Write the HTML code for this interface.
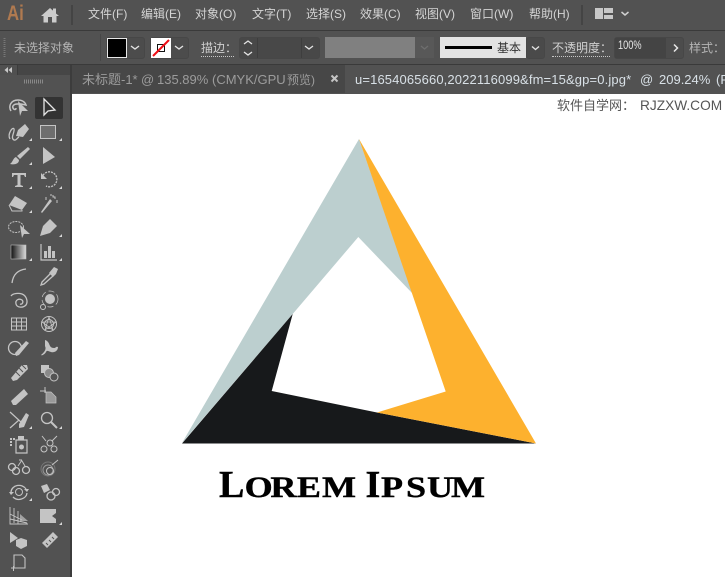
<!DOCTYPE html>
<html lang="zh"><head><meta charset="utf-8"><style>
*{box-sizing:border-box}
html,body{margin:0;padding:0;width:725px;height:577px;overflow:hidden;background:#525252;font-family:"Liberation Sans","Noto Sans CJK SC",sans-serif}
.a{position:absolute;white-space:nowrap}
.m{top:6px;font-size:12px;line-height:16px;color:#d4d4d4}
.l{top:40px;font-size:12px;line-height:16px;color:#bdbdbd}
.box{border:1px solid #474747;border-radius:3px;top:37px;height:22px;background:#4c4c4c}
.dot{border-bottom:1px dotted #c8c8c8;height:17px}
.t1{top:72px;font-size:13px;line-height:16px;color:#9c9c9c}
.t2{top:72px;font-size:13px;line-height:16px;color:#d8e0e6}
</style></head><body>
<div class="a" style="left:0;top:30px;width:725px;height:1px;background:#3a3a3a"></div>
<div class="a" style="left:0;top:64px;width:725px;height:1px;background:#3a3a3a"></div>
<div class="a" style="left:7px;top:1px;font:bold 21px/26px 'Liberation Sans',sans-serif;color:#b07a50;transform:scaleX(.8);transform-origin:0 0">Ai</div>
<svg class="a" style="left:0;top:0" width="80" height="30"><path d="M41 16 50 8l3 2.600V8.500h3v5L59 16h-2.500v6.500H52V17h-4v5.500h-4.500V16Z" fill="#cccccc"/><rect x="71" y="5" width="2" height="20" fill="#444"/></svg>
<div class="a m" style="left:88px">文件(F)</div>
<div class="a m" style="left:141px">编辑(E)</div>
<div class="a m" style="left:195px">对象(O)</div>
<div class="a m" style="left:252px">文字(T)</div>
<div class="a m" style="left:306px">选择(S)</div>
<div class="a m" style="left:360px">效果(C)</div>
<div class="a m" style="left:415px">视图(V)</div>
<div class="a m" style="left:470px">窗口(W)</div>
<div class="a m" style="left:529px">帮助(H)</div>
<svg class="a" style="left:580px;top:0" width="60" height="30"><rect x="1" y="5" width="2" height="20" fill="#444"/><path d="M15 8h8v11h-8ZM24 8h9v5h-9ZM24 15h9v4h-9Z" fill="#c8c8c8"/><path d="M41.500 12l3.500 3 3.500-3" fill="none" stroke="#d0d0d0" stroke-width="1.500"/></svg>

<svg class="a" style="left:3px;top:37px" width="4" height="22"><path d="M1.500 1v20" stroke="#777" stroke-width="2" stroke-dasharray="1 1"/></svg>
<div class="a l" style="left:14px;color:#b4b4b4">未选择对象</div>
<div class="a" style="left:100px;top:34px;width:1px;height:27px;background:#474747"></div>
<div class="a box" style="left:106px;width:39px"></div>
<div class="a" style="left:107px;top:38px;width:20px;height:20px;background:#000;border:1px solid #e8e8e8"></div>
<div class="a box" style="left:150px;width:39px"></div>
<svg class="a" style="left:151px;top:38px" width="20" height="20"><rect width="20" height="20" fill="#fff"/><rect x="6.500" y="6.500" width="7" height="7" fill="none" stroke="#111"/><path d="M2 18 18 2" stroke="#f00f16" stroke-width="2"/></svg>
<svg class="a" style="left:100px;top:30px" width="240" height="34"><g fill="none" stroke="#e4e4e4" stroke-width="1.400"><path d="M31 16l4 3 4-3M75 16l4 3 4-3"/></g></svg>
<div class="a l dot" style="left:201px;width:33px;color:#d0d0d0">描边：</div>
<div class="a box" style="left:239px;width:81px;background:#484848"></div>
<div class="a" style="left:257px;top:38px;width:1px;height:20px;background:#3e3e3e"></div>
<div class="a" style="left:301px;top:38px;width:1px;height:20px;background:#3e3e3e"></div>
<svg class="a" style="left:239px;top:37px" width="81" height="22"><g fill="none" stroke="#e4e4e4" stroke-width="1.300"><path d="M5 7l4-3 4 3M5 15l4 3 4-3M66 9l4 3 4-3"/></g></svg>
<div class="a" style="left:325px;top:37px;width:90px;height:21px;background:#808080"></div>
<div class="a" style="left:415px;top:37px;width:19px;height:21px;background:#585858"></div>
<svg class="a" style="left:415px;top:37px" width="19" height="21"><path d="M6 9l3.500 3 3.500-3" fill="none" stroke="#6e6e6e" stroke-width="1.300"/></svg>
<div class="a" style="left:440px;top:37px;width:86px;height:21px;background:#e2e2e2"></div>
<div class="a" style="left:445px;top:46px;width:47px;height:3px;background:#000"></div>
<div class="a" style="left:497px;top:40px;font-size:12px;line-height:16px;color:#333">基本</div>
<div class="a box" style="left:526px;width:19px;background:#4a4a4a"></div>
<svg class="a" style="left:526px;top:37px" width="19" height="22"><path d="M6 9.500l3.500 3 3.500-3" fill="none" stroke="#e4e4e4" stroke-width="1.400"/></svg>
<div class="a l dot" style="left:552px;width:58px;color:#d0d0d0">不透明度：</div>
<div class="a box" style="left:614px;width:70px;background:#4c4c4c"></div>
<div class="a" style="left:615px;top:38px;width:51px;height:20px;background:#444"></div>
<div class="a" style="left:618px;top:39px;font-size:11.500px;line-height:14px;color:#e8e8e8;transform:scaleX(.8);transform-origin:0 0">100%</div>
<svg class="a" style="left:667px;top:37px" width="17" height="22"><path d="M7 7.500l3.500 3.500L7 14.500" fill="none" stroke="#e8e8e8" stroke-width="1.500"/></svg>
<div class="a l" style="left:689px;color:#b4b4b4">样式：</div>

<div class="a" style="left:72px;top:65px;width:653px;height:28px;background:#424242"></div>
<div class="a" style="left:72px;top:65px;width:273px;height:28px;background:#474747"></div>
<div class="a" style="left:345px;top:65px;width:380px;height:28px;background:#525252"></div>
<div class="a t1" style="left:82px">未标题-1*</div>
<div class="a t1" style="left:141px">@</div>
<div class="a t1" style="left:157px">135.89%</div>
<div class="a t1" style="left:212px">(CMYK/GPU</div>
<div class="a t1" style="left:287px;font-size:12px">预览)</div>
<svg class="a" style="left:330px;top:74px" width="10" height="10"><path d="M1.500 1.500l6 6M7.500 1.500l-6 6" stroke="#c4c4c4" stroke-width="2"/></svg>
<div class="a t2" style="left:355px;letter-spacing:.13px">u=1654065660,2022116099&amp;fm=15&amp;gp=0.jpg*</div>
<div class="a t2" style="left:640px">@</div>
<div class="a t2" style="left:659px">209.24%</div>
<div class="a t2" style="left:716px">(R</div>
<div class="a" style="left:70px;top:65px;width:2px;height:512px;background:#3c3c3c"></div>
<div class="a" style="left:0;top:65px;width:70px;height:10px;background:#464646"></div>
<div class="a" style="left:0;top:65px;width:17px;height:10px;background:#505050"></div>
<div class="a" style="left:17px;top:65px;width:1px;height:10px;background:#3c3c3c"></div>
<svg class="a" style="left:0;top:65px" width="70" height="22"><path d="M8 2 4.500 5 8 8ZM12 2 8.500 5 12 8Z" fill="#c8c8c8"/><path d="M24 16.500h19" stroke="#888" stroke-width="4" stroke-dasharray="1 1"/></svg>

<div class="a" style="left:72px;top:94px;width:653px;height:483px;background:#fff"></div>
<div class="a" style="left:557px;top:97px;font-size:13px;line-height:18px;color:#555">软件自学网：</div>
<div class="a" style="left:640px;top:97px;font-size:13.700px;line-height:18px;color:#555">RJZXW.COM</div>

<svg class="a" style="left:0;top:0" width="725" height="577">
<polygon points="359,139 412.500,293.500 358.300,237 292.700,314 182,443" fill="#bccfcf"/>
<polygon points="182,443.500 292.700,314 271.700,391 377,412.500 536,443.500" fill="#17191b"/>
<polygon points="359,139 536,443.500 377,412.500 445.700,391.500" fill="#fdb12e"/>
<g font-family="Liberation Serif" font-weight="bold" stroke="#000" stroke-width=".4" fill="#000" style="font-variant:small-caps">
<text x="219" y="497" font-size="38">L</text>
<text transform="scale(1.22,1)" x="200.500 221.600 243.400 263.900" y="497" font-size="42">orem</text>
<text x="365.500" y="497" font-size="38">I</text>
<text transform="scale(1.22,1)" x="312.300 332.800 350 369.700" y="497" font-size="42">psum</text>
</g>
</svg>

<svg class="a" style="left:0;top:0" width="72" height="577">
<rect x="35" y="97" width="28" height="22" rx="2" fill="#333"/>
<g fill="#c4c4c4" stroke="none">
<g transform="translate(19,108)"><path d="M-8 3C-11-2-8-8-1-8 3-8 6-6 7-3L2-4-2-4C-5-4-7-2-6 0-5 2-3 2-3 0" fill="none" stroke="#c4c4c4" stroke-width="1.500"/><path d="M-1-7 9 3 3 3 1 8Z"/></g>
<g transform="translate(49,108)"><path d="M-5-9V7L-1 3 6 2Z" fill="none" stroke="#e6e6e6" stroke-width="1.300"/></g>
<g transform="translate(19,132)"><path d="M-1-2 6-8 10-3 4 5-3 4Z"/><path d="M-9 7C-12 2-6-6-5-3-4 0-9 6-5 8-3 9-2 6 0 5" fill="none" stroke="#c4c4c4" stroke-width="1.300"/></g>
<g transform="translate(48,132)"><rect x="-7.500" y="-6.500" width="15" height="13" fill="#6e6e6e" stroke="#c4c4c4"/></g>
<g transform="translate(19,156)"><path d="M9-9 11-7 1 3-2 0Z"/><path d="M-3 1 0 4C0 8-5 9-9 8-6 6-6 2-3 1Z"/></g>
<g transform="translate(49,156)"><path d="M-6-9 6 1-6 8Z"/></g>
<g transform="translate(19,180)"><path d="M-7-7H7V-3H6L5-5H1.500V5L4 6V7H-4V6L-1.500 5V-5H-5L-6-3H-7Z"/></g>
<g transform="translate(49,180)"><path d="M-7-2A7.500 7.500 0 1 1-3 6" fill="none" stroke="#c4c4c4" stroke-width="1.300" stroke-dasharray="2 1"/><path d="M-8-7V-1H-2Z"/></g>
<g transform="translate(18,204)"><path d="M-3-8 9-1 4 6-9 1Z"/><path d="M-9 1-6 7 4 7 4 6" fill="none" stroke="#c4c4c4"/></g>
<g transform="translate(49,204)"><path d="M-8 8-7 9 3-3 1-5Z"/><path d="M4-9V-7H6V-5M-3-7V-4M8-4V-1M2-10V-8" stroke="#c4c4c4" fill="none"/></g>
<g transform="translate(19,228)"><ellipse cx="-3" cy="-1" rx="7.500" ry="5.500" fill="none" stroke="#c4c4c4" stroke-dasharray="2 1"/><path d="M1-3 11 6 5 6 3 10Z"/></g>
<g transform="translate(48,228)"><path d="M-8 8-5-2 2-9 9-2 2 5Z"/></g>
<g transform="translate(19,252)"><defs><linearGradient id="g"><stop offset="0" stop-color="#111"/><stop offset="1" stop-color="#ddd"/></linearGradient></defs><rect x="-8" y="-7" width="15" height="14" fill="url(#g)" stroke="#bbb" stroke-width=".6"/></g>
<g transform="translate(49,252)"><path d="M-8-8V8H8" fill="none" stroke="#c4c4c4" stroke-width="1.200"/><path d="M-5-1H-2V6H-5ZM-1-6H2V6H-1ZM3-1H6V6H3Z"/></g>
<g transform="translate(19,276)"><path d="M-7 7C-6-1-2-6 7-7" fill="none" stroke="#c4c4c4" stroke-width="1.300"/></g>
<g transform="translate(49,276)"><path d="M2-3-7 6-8 9-5 8 4 0" fill="none" stroke="#c4c4c4" stroke-width="1.300"/><path d="M0-3 5-9 9-7 7-2 4 1Z"/></g>
<g transform="translate(19,300)"><path d="M-8-4C-6-7 0-7 3-6 8-4 9 2 7 5 4 8-2 8-3 4-4 0 0-2 3 0 5 2 3 5 1 4" fill="none" stroke="#c4c4c4" stroke-width="1.300"/></g>
<g transform="translate(49,300)"><circle cx="1" cy="-1" r="5"/><circle cx="-6" cy="7" r="2.500" fill="none" stroke="#c4c4c4"/><circle cx="1" cy="-1" r="8" fill="none" stroke="#c4c4c4" stroke-width=".7" stroke-dasharray="6 3"/></g>
<g transform="translate(19,324)"><path d="M-7.500-6h15v12h-15ZM-7.500-2h15M-7.500 2h15M-2.500-6V6M2.500-6V6" fill="none" stroke="#c4c4c4"/></g>
<g transform="translate(49,324)"><circle r="7.500" fill="none" stroke="#c4c4c4"/><circle r="4.500" fill="none" stroke="#c4c4c4"/><path d="M0-7 4 6-7-2H7L-4 6Z" fill="none" stroke="#c4c4c4" stroke-width=".8"/></g>
<g transform="translate(19,348)"><circle cx="-4" cy="0" r="6.500" fill="none" stroke="#c4c4c4" stroke-width="1.300"/><path d="M-3 8-4 5 7-7 10-5 0 7Z"/></g>
<g transform="translate(49,348)"><path d="M-4-8C2-6-1 0 5 0 7 0 7-2 9-1 9 3 5 5 2 4-1 3-2 2-3 4-4 6-7 8-8 7-6 5-2 2-4-2Z"/></g>
<g transform="translate(19,372)"><path d="M-8 6 3-7 8-7 9-3-2 8-6 9Z"/><path d="M-3 0 1 4M0-4 4 0M3-7 7-3" stroke="#535353" stroke-width="1"/></g>
<g transform="translate(49,372)"><rect x="-8" y="-7" width="8" height="8"/><circle cx="0" cy="1" r="4.500" fill="#8a8a8a" stroke="#c4c4c4"/><circle cx="5" cy="5" r="4" fill="#535353" stroke="#c4c4c4"/></g>
<g transform="translate(19,396)"><path d="M-8 5 5-7 9-2-3 9-6 9Z"/></g>
<g transform="translate(49,396)"><path d="M-3-4H2L7 1V7H-3Z" fill="#9a9a9a" stroke="#c4c4c4" stroke-width=".7"/><path d="M-9-5H-3M-4-9V-3" stroke="#c4c4c4" fill="none"/></g>
<g transform="translate(19,420)"><path d="M-9-8 3 3M-9 8 0 0" fill="none" stroke="#c4c4c4" stroke-width="1.200"/><path d="M0 4 7-7 10-5 5 7 0 8Z"/></g>
<g transform="translate(49,420)"><circle cx="-2" cy="-2" r="5.500" fill="none" stroke="#c4c4c4" stroke-width="1.300"/><path d="M2 2 8 8" stroke="#c4c4c4" stroke-width="2"/></g>
<g transform="translate(19,444)"><path d="M-3-4H8V9H-3Z" fill="none" stroke="#c4c4c4" stroke-width="1.200"/><rect x="-1" y="-8" width="6" height="4"/><circle cx="2.500" cy="3" r="2.500"/><path d="M-9-6h2v2h-2ZM-6-6h2v2h-2ZM-9-3h2v2h-2ZM-9 0h2v2h-2Z"/></g>
<g transform="translate(49,444)"><circle cx="1" cy="-1" r="3" fill="none" stroke="#c4c4c4"/><circle cx="-5" cy="5" r="3" fill="none" stroke="#c4c4c4"/><circle cx="5" cy="5" r="3" fill="none" stroke="#c4c4c4"/><path d="M-7-8-3-3M8-8 3-3" stroke="#c4c4c4" fill="none"/></g>
<g transform="translate(19,468)"><circle cx="-7" cy="-1" r="3.500" fill="none" stroke="#c4c4c4" stroke-width="1.300"/><circle cx="-3" cy="3" r="3.500" fill="none" stroke="#c4c4c4" stroke-width="1.300"/><circle cx="7" cy="2" r="3.500" fill="none" stroke="#c4c4c4" stroke-width="1.300"/><path d="M-1-2 3-8M3-8H0M6-2 3-7" stroke="#c4c4c4" fill="none"/></g>
<g transform="translate(49,468)"><circle cx="-1" cy="1" r="7" fill="none" stroke="#777"/><circle cx="-1" cy="2" r="5" fill="none" stroke="#999"/><circle cx="1" cy="3" r="3.500" fill="none" stroke="#c4c4c4"/><path d="M3-3 9-8" stroke="#c4c4c4"/></g>
<g transform="translate(19,492)"><path d="M-8 0A8 7 0 0 1 7-3M8 1A8 7 0 0 1-6 5" fill="none" stroke="#c4c4c4" stroke-width="1.300"/><circle r="3.500" fill="none" stroke="#c4c4c4"/><path d="M-10 0H-5L-8 3ZM5-3H10L8 0Z"/></g>
<g transform="translate(49,492)"><path d="M-8-6-2-8 1-2-5 1Z"/><circle cx="2" cy="4" r="4" fill="none" stroke="#c4c4c4" stroke-width="1.300"/><circle cx="7" cy="0" r="3.500" fill="none" stroke="#c4c4c4" stroke-width="1.300"/></g>
<g transform="translate(19,516)"><path d="M-9-9V8H9M-9-2 3 4M-9 3 8 7M-5-8V7M-1-5V8" fill="none" stroke="#c4c4c4" stroke-width=".9"/><path d="M1-2 9 5H1Z" opacity=".7"/></g>
<g transform="translate(48,516)"><path d="M-8-7H8V-3L4 0 8 3V7H-8Z"/></g>
<g transform="translate(19,540)"><path d="M-9-8-1-2-9 3Z"/><path d="M2-2 8 0V6L2 9-3 6V0Z"/></g>
<g transform="translate(49,540)"><path d="M-7 3 4-8 9-3-2 8Z"/><path d="M-3 3-1 5M0 0 2 2M3-3 5-1" stroke="#535353"/></g>
<g transform="translate(19,563)"><path d="M-5 5V-8H3L6-5V5H-5" fill="none" stroke="#c4c4c4" stroke-width="1.100"/><path d="M-8 5H-3M-5.500 3V8" stroke="#c4c4c4"/></g>
</g>
<g fill="#d8d8d8"><path d="M32 141h-3l3-3ZM32 165h-3l3-3ZM32 189h-3l3-3ZM32 213h-3l3-3ZM32 261h-3l3-3ZM32 429h-3l3-3ZM32 501h-3l3-3ZM62 141h-3l3-3ZM62 189h-3l3-3ZM62 237h-3l3-3ZM62 261h-3l3-3ZM62 429h-3l3-3ZM62 525h-3l3-3Z"/></g>
</svg>
</body></html>
